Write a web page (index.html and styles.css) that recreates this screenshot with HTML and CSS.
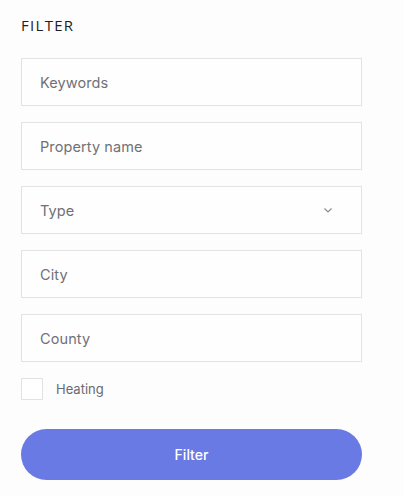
FILE: index.html
```html
<!DOCTYPE html>
<html>
<head>
<meta charset="utf-8">
<link rel="stylesheet" href="styles.css">
</head>
<body>
<div class="panel">
  <h2 class="title">FILTER</h2>
  <form class="form">
    <div class="field"><span class="ph">Keywords</span></div>
    <div class="field"><span class="ph">Property name</span></div>
    <div class="field select"><span class="ph">Type</span>
      <svg class="chev" width="8" height="5" viewBox="0 0 8 5"><path d="M0.5 0.5 L4 4 L7.5 0.5" fill="none" stroke="#8a8a90" stroke-width="1.2"/></svg>
    </div>
    <div class="field"><span class="ph">City</span></div>
    <div class="field"><span class="ph">County</span></div>
    <label class="check"><span class="box"></span><span class="check-label">Heating</span></label>
    <button type="button" class="btn">Filter</button>
  </form>
</div>
</body>
</html>
```
FILE: styles.css
```css
html, body {
  margin: 0;
  padding: 0;
  background: #fdfdfe;
}
body {
  width: 404px;
  height: 496px;
  overflow: hidden;
  font-family: "Inter", "Open Sans", sans-serif;
}
.panel {
  padding: 16px 42px 0 21px;
}
.title {
  margin: 0;
  font-family: "Open Sans", sans-serif;
  font-size: 15px;
  font-weight: 500;
  letter-spacing: 1.3px;
  color: #1e1e24;
  line-height: 18px;
}
.form {
  margin-top: 24px;
  display: flex;
  flex-direction: column;
  gap: 16px;
}
.field {
  box-sizing: border-box;
  height: 48px;
  border: 1px solid #e2e2e4;
  background: #fefefe;
  display: flex;
  align-items: center;
  padding: 0 18px;
}
.ph {
  font-size: 14.5px;
  color: #707077;
  letter-spacing: 0.1px;
}
.select {
  justify-content: space-between;
  padding-right: 29px;
}
.chev {
  display: block;
}
.check {
  display: flex;
  align-items: center;
  gap: 13px;
}
.box {
  box-sizing: border-box;
  width: 22px;
  height: 22px;
  border: 1px solid #e2e2e4;
  background: #fff;
}
.check-label {
  font-size: 13px;
  color: #6a6a70;
}
.btn {
  margin-top: 13px;
  height: 51px;
  border: none;
  border-radius: 26px;
  background: #6a7ae4;
  color: #fff;
  font-family: "Inter", sans-serif;
  font-size: 14px;
  font-weight: 500;
}
```
